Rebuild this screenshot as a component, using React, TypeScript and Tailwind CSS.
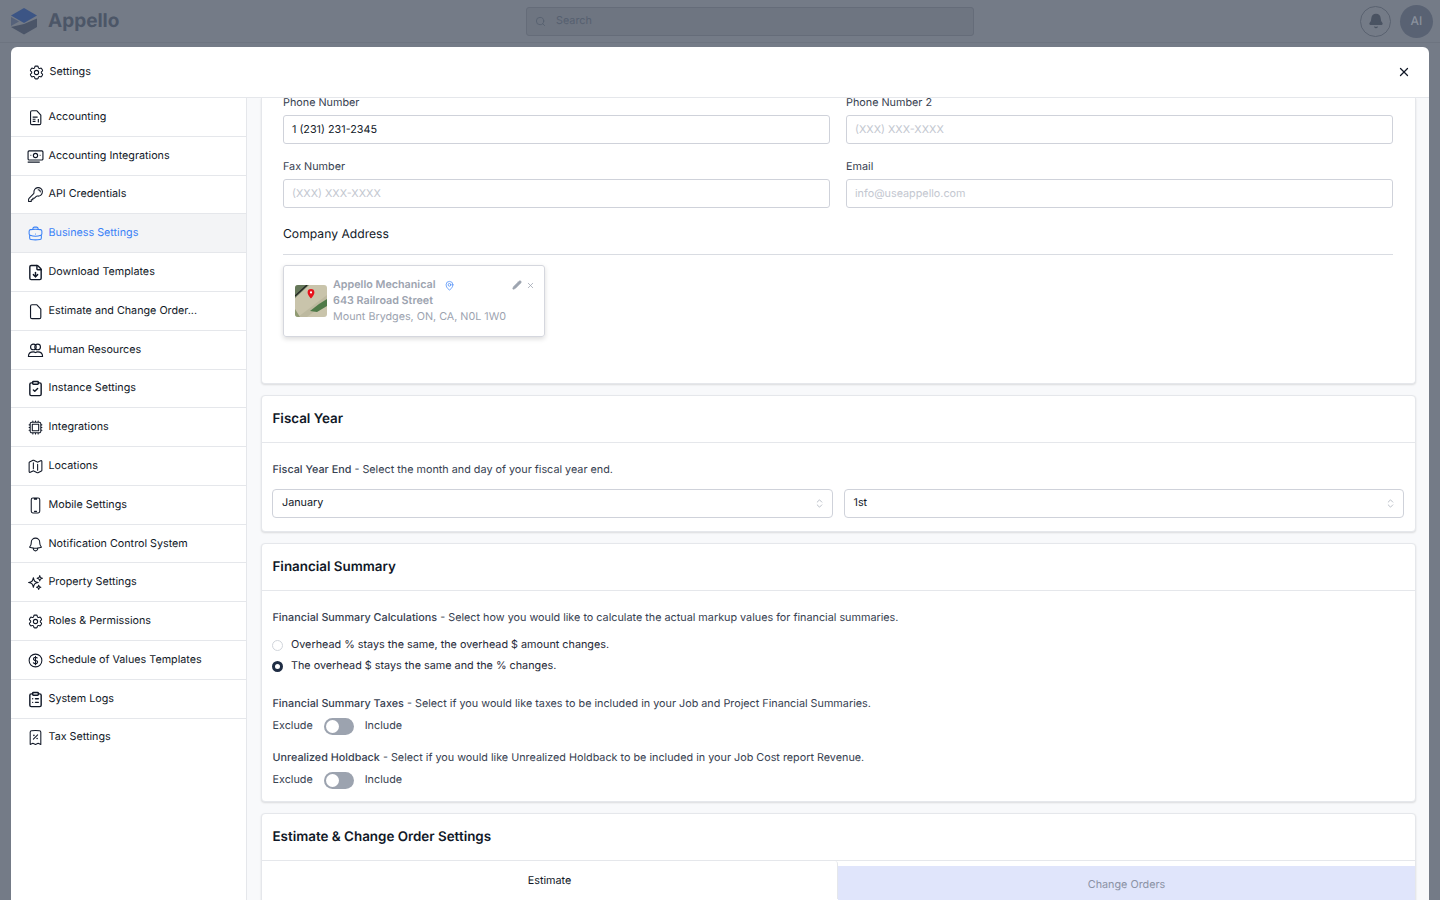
import { Bell, Search, X, ChevronsUpDown, Pencil, ClipboardCheck, ClipboardList, FileDown } from 'lucide-react'
import {
  HiOutlineCog6Tooth,
  HiOutlineKey,
  HiOutlineBriefcase,
  HiOutlineCpuChip,
  HiOutlineMap,
  HiOutlineDevicePhoneMobile,
  HiOutlineBell,
  HiOutlineSparkles,
  HiOutlineCurrencyDollar,
  HiOutlineReceiptPercent,
  HiOutlineMapPin,
} from 'react-icons/hi2'

type IconProps = { className?: string }

const DocIcon = ({ className }: IconProps) => (
  <svg className={className} viewBox="0 0 24 24" fill="none" stroke="currentColor" strokeWidth="1.6" strokeLinejoin="round">
    <path d="M5 4.500A2 2 0 0 1 7 2.500h7l5.500 6v11.500a2 2 0 0 1-2 2H7a2 2 0 0 1-2-2z" />
  </svg>
)

const AccountingIcon = ({ className }: IconProps) => (
  <svg className={className} viewBox="0 0 24 24" fill="none" stroke="currentColor" strokeWidth="1.6" strokeLinejoin="round">
    <path d="M5 4.500A2 2 0 0 1 7 2.500h7l5.500 6v11.500a2 2 0 0 1-2 2H7a2 2 0 0 1-2-2z" />
    <path d="M8 11.500h7M8 14.500h4M8 17.500h4M16 14v5" />
  </svg>
)

const ComputerIcon = ({ className }: IconProps) => (
  <svg className={className} viewBox="0 0 24 24" fill="none" stroke="currentColor" strokeWidth="1.6">
    <rect x="1.500" y="4" width="21" height="13" rx="1.500" />
    <circle cx="12" cy="10.500" r="3" />
    <path d="M5 10.500h1M18 10.500h1M1 20h17" />
  </svg>
)

const PeopleIcon = ({ className }: IconProps) => (
  <svg className={className} viewBox="0 0 24 24" fill="none" stroke="currentColor" strokeWidth="1.6" strokeLinejoin="round">
    <circle cx="9" cy="7" r="4" />
    <circle cx="15" cy="7" r="4" />
    <path d="M2 20.500c0-4 3-6.500 7-6.500 1.500 0 2.300.4 3 1 .7-.6 1.500-1 3-1 4 0 7 2.500 7 6.500z" />
  </svg>
)

const navItems = [
  { label: 'Accounting', icon: AccountingIcon, h: 'h-[39px]' },
  { label: 'Accounting Integrations', icon: ComputerIcon, h: 'h-[39px]' },
  { label: 'API Credentials', icon: HiOutlineKey, h: 'h-[38px]' },
  { label: 'Business Settings', icon: HiOutlineBriefcase, h: 'h-[39px]', active: true },
  { label: 'Download Templates', icon: FileDown, h: 'h-[39px]' },
  { label: 'Estimate and Change Order...', icon: DocIcon, h: 'h-[39px]' },
  { label: 'Human Resources', icon: PeopleIcon, h: 'h-[39px]' },
  { label: 'Instance Settings', icon: ClipboardCheck, h: 'h-[38px]' },
  { label: 'Integrations', icon: HiOutlineCpuChip, h: 'h-[39px]' },
  { label: 'Locations', icon: HiOutlineMap, h: 'h-[39px]' },
  { label: 'Mobile Settings', icon: HiOutlineDevicePhoneMobile, h: 'h-[39px]' },
  { label: 'Notification Control System', icon: HiOutlineBell, h: 'h-[38px] pt-[1px]' },
  { label: 'Property Settings', icon: HiOutlineSparkles, h: 'h-[39px]' },
  { label: 'Roles & Permissions', icon: HiOutlineCog6Tooth, h: 'h-[39px]' },
  { label: 'Schedule of Values Templates', icon: HiOutlineCurrencyDollar, h: 'h-[39px]' },
  { label: 'System Logs', icon: ClipboardList, h: 'h-[39px]' },
  { label: 'Tax Settings', icon: HiOutlineReceiptPercent, h: 'h-[38px] pb-[1px]', last: true },
]

const Field = ({ label, value, placeholder }: { label: string; value?: string; placeholder?: string }) => (
  <div className="flex-1">
    <div className="h-[19px] text-[10.800px] leading-[14px] text-[#374151]">{label}</div>
    <div
      className={`flex h-[29px] items-center rounded-[3px] border border-[#cfd2da] px-2 pt-[2px] text-[10.800px] ${
        value ? 'text-[#111827]' : 'text-[#c3c7d0]'
      }`}>
      {value ?? placeholder}
    </div>
  </div>
)

const SelectBox = ({ value }: { value: string }) => (
  <div className="flex h-[29px] flex-1 items-center justify-between rounded-[4px] border border-[#cfd2da] pl-[9px] pr-[7px] text-[10.800px] text-[#111827]">
    {value}
    <ChevronsUpDown className="h-[11px] w-[11px] text-[#9ca3af]" strokeWidth={1.5} />
  </div>
)

const Toggle = () => (
  <div className="flex h-[16px] items-center gap-[11px] text-[10.800px] text-[#374151]">
    <span>Exclude</span>
    <span className="flex h-[17px] w-[30px] items-center rounded-full bg-[#9ca3af] p-[2px]">
      <span className="h-[13px] w-[13px] rounded-full bg-white" />
    </span>
    <span>Include</span>
  </div>
)

const MapThumb = () => (
  <svg className="h-[32px] w-[32px] rounded-[3px]" viewBox="0 0 32 32">
    <rect width="32" height="32" fill="#c9c4ab" />
    <path d="M0 0h14L0 13z" fill="#66785a" />
    <path d="M0 11L12 0" stroke="#222" strokeWidth="1.200" />
    <path d="M3 32l29-22v7L12 32z" fill="#bdb99f" />
    <path d="M15 26l9-7 8-5v7l-10 6z" fill="#4f7a48" />
    <path d="M0 24l5 8H0z" fill="#8f9a72" />
    <path d="M16 4a3.400 3.400 0 0 0-3.400 3.400c0 2.500 3.400 6 3.400 6s3.400-3.500 3.400-6A3.400 3.400 0 0 0 16 4z" fill="#e8111b" />
    <circle cx="16" cy="7.400" r="1.100" fill="#fff" />
  </svg>
)

const Card = ({ children, className = '' }: { children: React.ReactNode; className?: string }) => (
  <div className={`shrink-0 rounded-[4px] border border-[#e5e7eb] bg-white shadow-[0_1px_2px_rgba(0,0,0,0.12)] ${className}`}>
    {children}
  </div>
)

const CardTitle = ({ title }: { title: string }) => (
  <div className="flex h-[47px] items-center border-b border-[#e5e7eb] pl-[10.500px] text-[13.400px] font-semibold text-[#111827]">
    {title}
  </div>
)

const App = () => {
  return (
    <div className="relative h-screen overflow-hidden bg-[#747b87] font-['Inter',sans-serif] [text-rendering:geometricPrecision]">
      <header className="flex h-[43px] items-center border-b border-[#6d7480] pl-[10px] pr-[7px]">
        <div className="flex w-[516px] items-center gap-[10px]">
          <svg className="h-[28px] w-[28px]" viewBox="0 0 28 28">
            <path d="M14 1L27 8.500 14 16 1 8.500z" fill="#3c5585" />
            <path d="M1 10l8 4.500L1 19z" fill="#56627a" />
            <path d="M27 11.500v8.500L14 27.500 1 20l13-3z" fill="#4b5568" />
          </svg>
          <span className="text-[19px] font-bold text-[#4c5667]">Appello</span>
        </div>
        <div className="flex h-[29px] w-[448px] items-center gap-[10px] rounded-[3px] border border-[#656c79] bg-[#6e7581] pl-[8px] text-[10.800px] text-[#566070]">
          <Search className="h-[11px] w-[11px]" />
          Search
        </div>
        <div className="flex flex-1 items-center justify-end gap-[9px]">
          <div className="flex h-[31px] w-[31px] items-center justify-center rounded-full border border-[#5a6270]">
            <Bell className="h-[16px] w-[16px] fill-[#4a5362] text-[#4a5362]" />
          </div>
          <div className="flex h-[33px] w-[33px] items-center justify-center rounded-full bg-[#596273] text-[12px] font-medium text-[#8a919d]">
            AI
          </div>
        </div>
      </header>

      <div className="absolute left-[11px] top-[47px] flex h-[853px] w-[1418px] flex-col overflow-hidden rounded-t-[6px] bg-white">
        <div className="flex h-[51px] shrink-0 items-center justify-between border-b border-[#e5e7eb] pl-[16.500px] pr-[18px]">
          <div className="flex items-center gap-[5px] text-[10.800px] text-[#111827]">
            <HiOutlineCog6Tooth className="h-[17px] w-[17px] text-[#111827]" />
            Settings
          </div>
          <X className="h-[14px] w-[14px] text-[#111827]" strokeWidth={2.25} />
        </div>

        <div className="flex min-h-0 flex-1">
          <nav className="w-[236px] shrink-0 border-r border-[#e5e7eb]">
            {navItems.map(({ label, icon: Icon, h, active, last }) => (
              <div
                key={label}
                className={`flex ${h} items-center gap-[5px] pl-[15.500px] text-[10.750px] ${
                  last ? '' : 'border-b border-[#e5e7eb]'
                } ${active ? 'bg-[#f3f4f6] text-[#3b82f6]' : 'text-[#111827]'}`}>
                <Icon className="h-[17px] w-[17px] shrink-0" />
                <span>{label}</span>
              </div>
            ))}
          </nav>

          <div className="flex min-w-0 flex-1 flex-col gap-[11px] overflow-hidden bg-[#f8f9fb] pl-[14px] pr-[13px]">
            <Card className="h-[286px] rounded-t-none border-t-0 pl-[21px] pr-[22px]">
              <div className="-mt-[2px] flex gap-[16px]">
                <Field label="Phone Number" value="1 (231) 231-2345" />
                <Field label="Phone Number 2" placeholder="(XXX) XXX-XXXX" />
              </div>
              <div className="mt-[16px] flex gap-[16px]">
                <Field label="Fax Number" placeholder="(XXX) XXX-XXXX" />
                <Field label="Email" placeholder="info@useappello.com" />
              </div>
              <div className="mt-[18px] h-[29px] border-b border-[#d9dce2] text-[12.150px] leading-[16px] text-[#111827]">Company Address</div>
              <div className="mt-[10px] flex h-[72px] w-[262px] gap-[6px] rounded-[3px] border border-[#d5d7de] pl-[11px] pr-[9px] pt-[11px] shadow-[0_2px_5px_rgba(0,0,0,0.14)]">
                <div className="pt-[8px]">
                  <MapThumb />
                </div>
                <div className="flex-1 whitespace-nowrap text-[10.750px] leading-[16px] text-[#9ca3af]">
                  <div className="flex items-center gap-[8px] font-semibold">
                    Appello Mechanical
                    <HiOutlineMapPin className="h-[11px] w-[11px] text-[#3b82f6]" />
                  </div>
                  <div className="font-semibold">643 Railroad Street</div>
                  <div>Mount Brydges, ON, CA, N0L 1W0</div>
                </div>
                <div className="flex h-[16px] items-center gap-[4px] text-[#9ca3af]">
                  <Pencil className="h-[10px] w-[10px] fill-[#9ca3af]" />
                  <X className="h-[9px] w-[9px]" />
                </div>
              </div>
            </Card>

            <Card className="h-[137px]">
              <CardTitle title="Fiscal Year" />
              <div className="pl-[10px] pr-[11px] pt-[20px]">
                <div className="ml-[0.500px] h-[26px] text-[10.800px] leading-[14px] text-[#374151]">
                  <span className="font-medium">Fiscal Year End</span> - Select the month and day of your fiscal year end.
                </div>
                <div className="flex gap-[11px]">
                  <SelectBox value="January" />
                  <SelectBox value="1st" />
                </div>
              </div>
            </Card>

            <Card className="h-[259px]">
              <CardTitle title="Financial Summary" />
              <div className="pl-[10.500px] pr-[11px] pt-[20px] text-[10.800px] leading-[14px] text-[#374151]">
                <div>
                  <span className="font-medium">Financial Summary Calculations</span> - Select how you would like to calculate the actual markup values for financial summaries.
                </div>
                <div className="-ml-[0.500px] mt-[13px] flex items-center gap-[8px] text-[#1f2937]">
                  <span className="h-[11px] w-[11px] rounded-full border border-[#d1d5db]" />
                  Overhead % stays the same, the overhead $ amount changes.
                </div>
                <div className="-ml-[0.500px] mt-[7px] flex items-center gap-[8px] text-[#1f2937]">
                  <span className="h-[11px] w-[11px] rounded-full border-[3px] border-[#1f2d44] bg-white" />
                  The overhead $ stays the same and the % changes.
                </div>
                <div className="mt-[24px] h-[15px]">
                  <span className="font-medium">Financial Summary Taxes</span> - Select if you would like taxes to be included in your Job and Project Financial Summaries.
                </div>
                <div className="mt-[6px]">
                  <Toggle />
                </div>
                <div className="mt-[17px] h-[15px]">
                  <span className="font-medium">Unrealized Holdback</span> - Select if you would like Unrealized Holdback to be included in your Job Cost report Revenue.
                </div>
                <div className="mt-[6px]">
                  <Toggle />
                </div>
              </div>
            </Card>

            <Card className="h-[120px]">
              <CardTitle title="Estimate & Change Order Settings" />
              <div className="flex">
                <div className="flex h-[38px] w-[576px] items-center justify-center rounded-t-[3px] border-r border-[#e5e7eb] pt-[2px] text-[10.800px] text-[#111827]">
                  Estimate
                </div>
                <div className="mt-[5px] flex h-[36px] flex-1 items-center justify-center bg-[#e0e5fb] pt-[2px] text-[10.800px] text-[#8b92a5]">
                  Change Orders
                </div>
              </div>
            </Card>
          </div>
        </div>
      </div>
    </div>
  )
}

export default App
